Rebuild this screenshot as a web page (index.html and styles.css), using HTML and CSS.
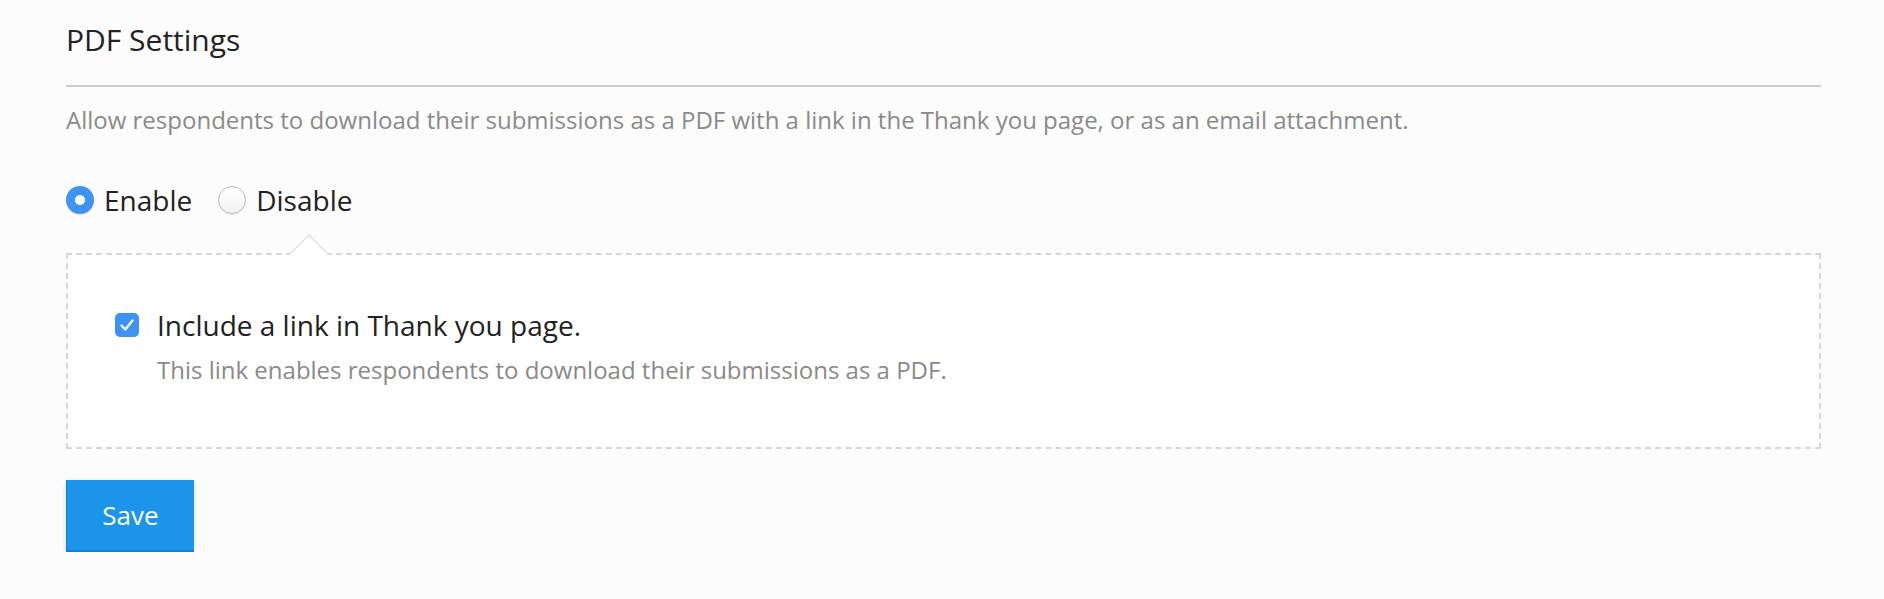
FILE: index.html
```html
<!DOCTYPE html>
<html lang="en">
<head>
    <meta charset="UTF-8">
    <title>PDF Settings</title>
    <link rel="stylesheet" href="styles.css">
</head>
<body>

    <div class="settings">
        <h2 class="settings-title">PDF Settings</h2>
        <p class="settings-desc">Allow respondents to download their submissions as a PDF with a link in the Thank you page, or as an email attachment.</p>

        <div class="radio-group">
            <label class="radio checked"><span class="radio-dot"></span>Enable</label>
            <label class="radio"><span class="radio-dot"></span>Disable</label>
        </div>

        <div class="options-box">
            <span class="options-arrow"></span>
            <div class="option">
                <span class="checkbox">
                    <svg width="24" height="24" viewBox="0 0 24 24"><path d="M6.5 12.5l3.8 4 7.2-9" fill="none" stroke="#fff" stroke-width="2.4" stroke-linecap="round" stroke-linejoin="round"/></svg>
                </span>
                <div class="option-text">
                    <div class="option-label">Include a link in Thank you page.</div>
                    <div class="option-help">This link enables respondents to download their submissions as a PDF.</div>
                </div>
            </div>
        </div>

        <button class="btn-save">Save</button>
    </div>

</body>
</html>
```

FILE: styles.css
```css
body {
    margin: 0;
    background: #fcfcfc;
    font-family: "Open Sans", "Liberation Sans", sans-serif;
}
.settings {
    width: 1755px;
    padding: 19px 0 0 66px;
}
.settings-title {
    margin: 0;
    padding-bottom: 24px;
    border-bottom: 2px solid #cccccc;
    font-size: 30px;
    font-weight: normal;
    line-height: 42px;
    color: #222;
}
.settings-desc {
    margin: 16px 0 0;
    font-size: 24px;
    line-height: 34px;
    color: #8a8a8a;
}
.radio-group {
    display: flex;
    gap: 26px;
    margin-top: 43px;
}
.radio {
    display: flex;
    align-items: center;
    gap: 10px;
    font-size: 28px;
    line-height: 40px;
    color: #222;
}
.radio-dot {
    width: 28px;
    height: 28px;
    box-sizing: border-box;
    border-radius: 50%;
    border: 1px solid #bdbdbd;
    background: linear-gradient(#ffffff, #f2f2f2);
    box-shadow: 0 1px 1px rgba(0,0,0,0.1);
}
.radio.checked .radio-dot {
    border: none;
    background: radial-gradient(circle, #ffffff 0, #ffffff 4.5px, #3d93f6 5.5px);
}
.options-box {
    position: relative;
    margin-top: 33px;
    padding: 50px 0 60px 47px;
    border: 2px dashed #d6d6d6;
    background: #ffffff;
}
.options-arrow {
    position: absolute;
    left: 227px;
    top: -15px;
    width: 28px;
    height: 28px;
    box-sizing: border-box;
    background: #ffffff;
    border-top: 1.5px solid #d9d9d9;
    border-left: 1.5px solid #d9d9d9;
    transform: rotate(45deg);
}
.option {
    display: flex;
    gap: 18px;
}
.checkbox {
    flex: none;
    width: 24px;
    height: 24px;
    margin-top: 8px;
    border-radius: 5px;
    background: #3b93f5;
}
.checkbox svg {
    display: block;
}
.option-label {
    font-size: 28px;
    line-height: 40px;
    color: #222;
}
.option-help {
    margin-top: 8px;
    font-size: 24px;
    line-height: 34px;
    color: #8a8a8a;
}
.btn-save {
    display: block;
    margin-top: 31px;
    width: 128px;
    height: 72px;
    padding: 0;
    border: none;
    border-bottom: 2px solid #0c84d8;
    border-left: 1px solid #0c84d8;
    background: #1b94e9;
    color: #fff;
    font-family: inherit;
    font-size: 26px;
    box-shadow: 0 2px 5px rgba(0,0,0,0.15);
    cursor: pointer;
}
```
